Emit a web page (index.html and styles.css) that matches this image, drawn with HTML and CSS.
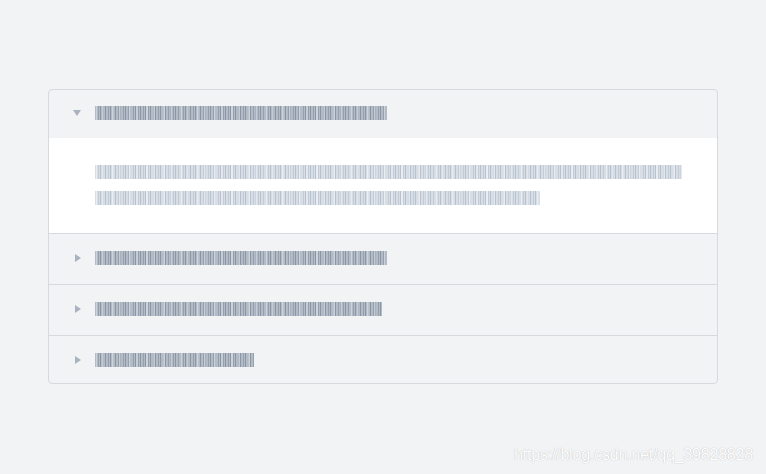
FILE: index.html
```html
<!DOCTYPE html>
<html lang="en">
<head>
<meta charset="utf-8">
<title>Collapse</title>
<link rel="stylesheet" href="styles.css">
</head>
<body>
<div class="page">
  <div class="collapse">
    <div class="item open">
      <div class="head">
        <span class="arrow down"></span>
        <span class="bar dark" style="width:292px"></span>
      </div>
      <div class="body">
        <span class="bar light" style="width:587px"></span>
        <span class="bar light" style="width:445px"></span>
      </div>
    </div>
    <div class="item">
      <div class="head">
        <span class="arrow right"></span>
        <span class="bar dark" style="width:292px"></span>
      </div>
    </div>
    <div class="item">
      <div class="head">
        <span class="arrow right"></span>
        <span class="bar dark" style="width:287px"></span>
      </div>
    </div>
    <div class="item">
      <div class="head">
        <span class="arrow right"></span>
        <span class="bar dark" style="width:159px"></span>
      </div>
    </div>
  </div>
  <div class="watermark">https://blog.csdn.net/qq_39828828</div>
</div>
</body>
</html>
```
FILE: styles.css
```css
html, body {
  margin: 0;
  padding: 0;
  background: #f2f3f5;
  font-family: "Liberation Sans", Arial, sans-serif;
}
.page {
  width: 766px;
  height: 474px;
  padding: 89px 0 0 48px;
  box-sizing: border-box;
  position: relative;
}
.collapse {
  width: 670px;
  box-sizing: border-box;
  border: 1px solid #d6d9de;
  border-radius: 4px;
  background: #f2f3f5;
  overflow: hidden;
}
.item + .item {
  border-top: 1px solid #d6d9de;
}
.head {
  box-sizing: border-box;
  height: 50px;
  display: flex;
  align-items: center;
  padding: 0 0 3px 24px;
  gap: 14px;
}
.item.open .head {
  height: 48px;
}
.item:last-child .head {
  height: 47px;
  padding-bottom: 0;
}
.body {
  background: #ffffff;
  padding: 27px 0 28px 46px;
  display: flex;
  flex-direction: column;
  gap: 12px;
}
.arrow {
  display: block;
  flex: none;
  width: 0;
  height: 0;
}
.arrow.down {
  border-left: 4px solid transparent;
  border-right: 4px solid transparent;
  border-top: 6px solid #a9b2be;
}
.arrow.right {
  border-top: 4px solid transparent;
  border-bottom: 4px solid transparent;
  border-left: 6px solid #a9b2be;
  margin-left: 2px;
}
.bar {
  display: block;
  height: 14px;
}
.bar.dark {
  background-color: #b3bbc6;
  background-image:
    repeating-linear-gradient(90deg, rgba(255,255,255,0.35) 0 2px, transparent 2px 7px, rgba(255,255,255,0.25) 7px 9px, transparent 9px 17px),
    repeating-linear-gradient(90deg, #8b96a5 0 1px, transparent 1px 3px, #95a0ae 3px 4px, transparent 4px 5px);
}
.bar.light {
  background-color: #d8dee6;
  background-image:
    repeating-linear-gradient(90deg, rgba(255,255,255,0.45) 0 2px, transparent 2px 7px, rgba(255,255,255,0.3) 7px 9px, transparent 9px 17px),
    repeating-linear-gradient(90deg, #b8c2ce 0 1px, transparent 1px 3px, #c2cbd6 3px 4px, transparent 4px 5px);
}
.watermark {
  position: absolute;
  left: 514px;
  top: 446px;
  font-size: 16px;
  letter-spacing: -0.2px;
  color: #ffffff;
  text-shadow: 0 0 1px rgba(0,0,0,0.3);
}
```
